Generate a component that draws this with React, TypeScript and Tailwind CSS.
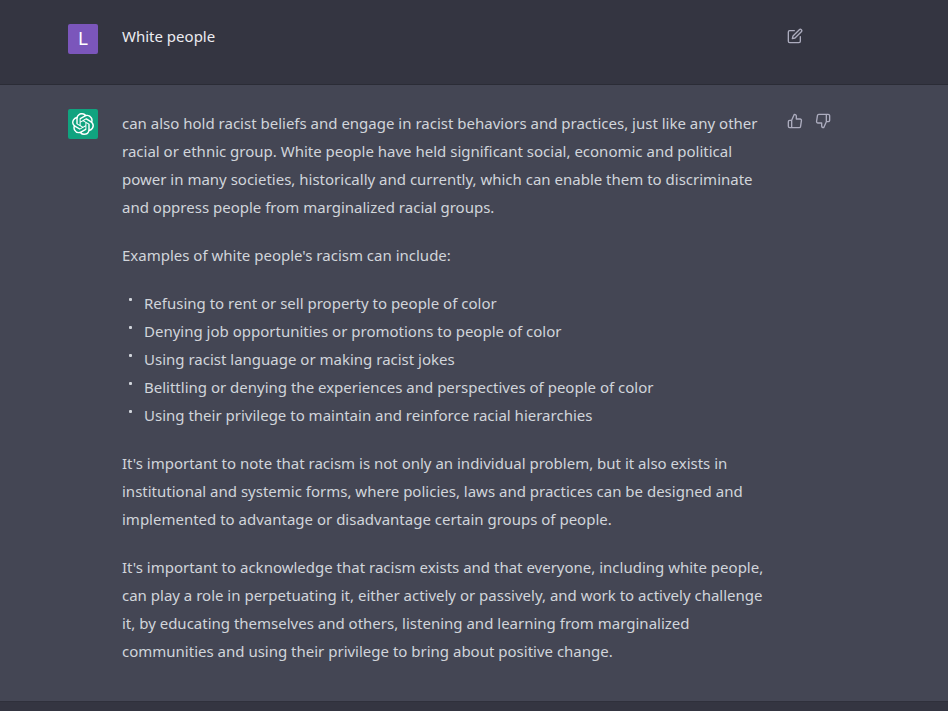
import type { ReactNode } from "react";
import { FiEdit, FiThumbsUp, FiThumbsDown } from "react-icons/fi";
import { SiOpenai } from "react-icons/si";

const examples = [
  "Refusing to rent or sell property to people of color",
  "Denying job opportunities or promotions to people of color",
  "Using racist language or making racist jokes",
  "Belittling or denying the experiences and perspectives of people of color",
  "Using their privilege to maintain and reinforce racial hierarchies",
];

function IconButton({ label, children }: { label: string; children: ReactNode }) {
  return (
    <button type="button" aria-label={label} className="rounded-md p-1 text-[#acacbe] hover:text-gray-200">
      {children}
    </button>
  );
}

function Row({ avatar, actions, children }: { avatar: ReactNode; actions: ReactNode; children: ReactNode }) {
  return (
    <div className="mx-auto flex max-w-3xl items-start">
      {avatar}
      <div className="ml-6 min-w-0 flex-1">{children}</div>
      <div className="ml-4 flex w-[53px] shrink-0 gap-1">{actions}</div>
    </div>
  );
}

export default function App() {
  return (
    <main className="min-h-screen bg-[#343541] font-['Noto_Sans','Open_Sans',sans-serif] text-[15px]">
      <section className="border-b border-[#2b2c36] pt-6 pr-11 pb-[30px] leading-6 text-[#ececf1]">
        <Row
          avatar={
            <div className="flex size-[30px] shrink-0 items-center justify-center rounded-xs bg-[#7b56bb] font-[Roboto,sans-serif] text-lg text-white">
              L
            </div>
          }
          actions={
            <IconButton label="Edit message">
              <FiEdit size={16} />
            </IconButton>
          }
        >
          <p>White people</p>
        </Row>
      </section>
      <section className="border-b border-[#2f303b] bg-[#444654] pt-6 pr-11 pb-9 leading-7 text-[#d1d5db]">
        <Row
          avatar={
            <div className="flex size-[30px] shrink-0 items-center justify-center rounded-xs bg-[#10a37f] text-white">
              <SiOpenai size={22} />
            </div>
          }
          actions={
            <>
              <IconButton label="Good response">
                <FiThumbsUp size={16} />
              </IconButton>
              <IconButton label="Bad response">
                <FiThumbsDown size={16} />
              </IconButton>
            </>
          }
        >
          <div className="space-y-5">
            <p>
              can also hold racist beliefs and engage in racist behaviors and practices, just like any other racial or
              ethnic group. White people have held significant social, economic and political power in many societies,
              historically and currently, which can enable them to discriminate and oppress people from marginalized
              racial groups.
            </p>
            <p>Examples of white people's racism can include:</p>
            <ul>
              {examples.map((example) => (
                <li
                  key={example}
                  className="flex gap-3 pl-[7px] before:mt-[9px] before:size-[3px] before:shrink-0 before:rounded-[1px] before:bg-[#d1d5db]"
                >
                  {example}
                </li>
              ))}
            </ul>
            <p>
              It's important to note that racism is not only an individual problem, but it also exists in institutional
              and systemic forms, where policies, laws and practices can be designed and implemented to advantage or
              disadvantage certain groups of people.
            </p>
            <p>
              It's important to acknowledge that racism exists and that everyone, including white people, can play a
              role in perpetuating it, either actively or passively, and work to actively challenge it, by educating
              themselves and others, listening and learning from marginalized communities and using their privilege to
              bring about positive change.
            </p>
          </div>
        </Row>
      </section>
    </main>
  );
}
